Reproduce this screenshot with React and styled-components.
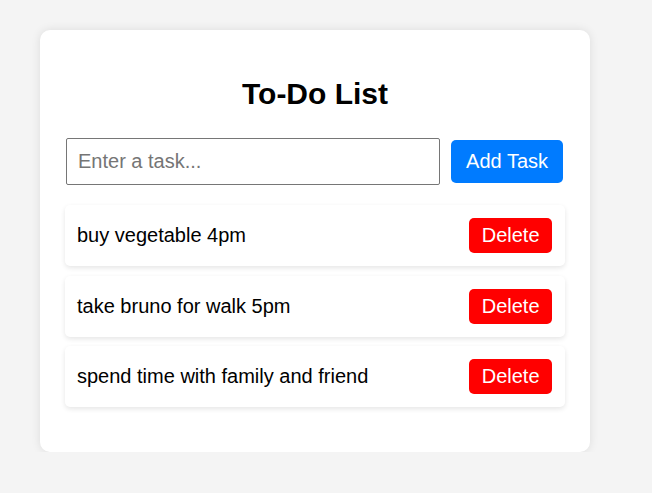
import React, { useState } from 'react'
import styled, { createGlobalStyle } from 'styled-components'

const GlobalStyle = createGlobalStyle`
  body {
    margin: 0;
    background-color: #f4f4f4;
    font-family: "Liberation Sans", Arial, sans-serif;
  }
`

const Card = styled.div`
  width: 500px;
  margin: 30px 0 0 40px;
  padding: 25px 25px 45px;
  background: #fff;
  border-radius: 10px;
  box-shadow: 0 0 10px rgba(0, 0, 0, 0.1);
`

const Title = styled.h1`
  font-size: 30px;
  font-weight: 700;
  text-align: center;
  margin: 22px 0 27px;
  color: #000;
`

const InputRow = styled.form`
  display: flex;
  align-items: center;
  gap: 11px;
  padding: 0 2px 0 1px;
  margin-bottom: 20px;
`

const TaskInput = styled.input`
  flex: 1;
  font-family: inherit;
  font-size: 20px;
  padding: 11px 11px;
  border: 1px solid #767676;
  border-radius: 2px;
  outline: none;
  &::placeholder {
    color: #757575;
  }
`

const Button = styled.button`
  font-family: inherit;
  font-size: 20px;
  color: #fff;
  border: none;
  border-radius: 5px;
  cursor: pointer;
  background: ${p => p.$color};
  padding: ${p => p.$pad};
`

const List = styled.ul`
  list-style: none;
  margin: 0;
  padding: 0;
  display: flex;
  flex-direction: column;
  gap: 9.5px;
`

const Item = styled.li`
  display: flex;
  align-items: center;
  justify-content: space-between;
  padding: 13px 13px 13px 12px;
  background: #fff;
  border-radius: 5px;
  box-shadow: 0 2px 5px rgba(0, 0, 0, 0.1);
  font-size: 20px;
  color: #000;
`

const App = () => {
  const [tasks, setTasks] = useState([
    'buy vegetable 4pm',
    'take bruno for walk 5pm',
    'spend time with family and friend',
  ])
  const [text, setText] = useState('')

  const addTask = e => {
    e.preventDefault()
    if (!text.trim()) return
    setTasks([...tasks, text])
    setText('')
  }

  return (
    <>
      <GlobalStyle />
      <Card>
        <Title>To-Do List</Title>
        <InputRow onSubmit={addTask}>
          <TaskInput
            placeholder="Enter a task..."
            value={text}
            onChange={e => setText(e.target.value)}
          />
          <Button type="submit" $color="#007bff" $pad="10px 15px">Add Task</Button>
        </InputRow>
        <List>
          {tasks.map((t, i) => (
            <Item key={i}>
              <span>{t}</span>
              <Button
                $color="#ff0000"
                $pad="6px 12.5px"
                onClick={() => setTasks(tasks.filter((_, j) => j !== i))}
              >
                Delete
              </Button>
            </Item>
          ))}
        </List>
      </Card>
    </>
  )
}

export default App
